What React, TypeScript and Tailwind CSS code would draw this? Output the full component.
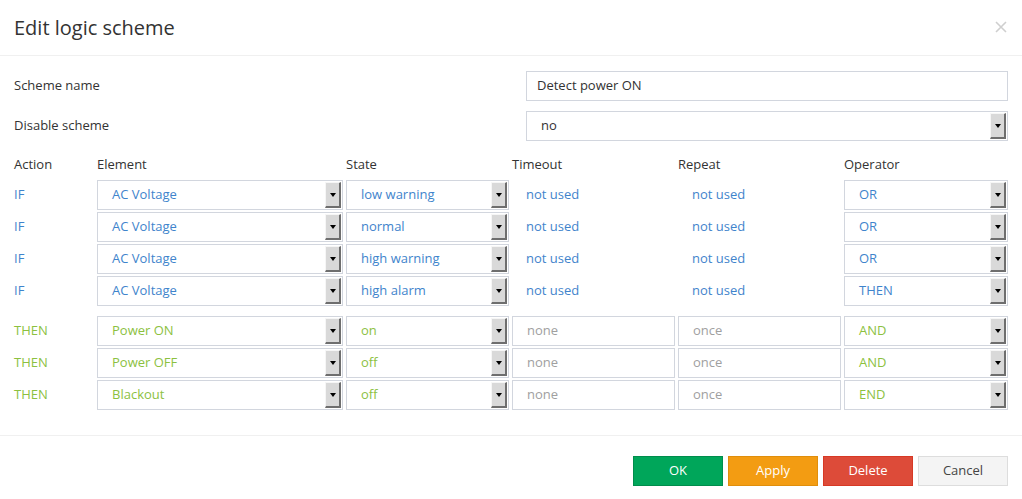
import React from "react";

type Tone = "blue" | "green";

// rule rows of the scheme
const rules: {
  action: string;
  element: string;
  state: string;
  timeout: string;
  repeat: string;
  operator: string;
  tone: Tone;
}[] = [
  { action: "IF", element: "AC Voltage", state: "low warning", timeout: "not used", repeat: "not used", operator: "OR", tone: "blue" },
  { action: "IF", element: "AC Voltage", state: "normal", timeout: "not used", repeat: "not used", operator: "OR", tone: "blue" },
  { action: "IF", element: "AC Voltage", state: "high warning", timeout: "not used", repeat: "not used", operator: "OR", tone: "blue" },
  { action: "IF", element: "AC Voltage", state: "high alarm", timeout: "not used", repeat: "not used", operator: "THEN", tone: "blue" },
  { action: "THEN", element: "Power ON", state: "on", timeout: "none", repeat: "once", operator: "AND", tone: "green" },
  { action: "THEN", element: "Power OFF", state: "off", timeout: "none", repeat: "once", operator: "AND", tone: "green" },
  { action: "THEN", element: "Blackout", state: "off", timeout: "none", repeat: "once", operator: "END", tone: "green" },
];

const toneText: Record<Tone, string> = {
  blue: "text-[#3f84cc]",
  green: "text-[#8cc13f]",
};

function ArrowButton() {
  return (
    <div className="my-px mr-px flex w-[16px] items-center justify-center self-stretch border-t border-l border-r-2 border-b-2 border-t-[#f6f6f6] border-l-[#f6f6f6] border-r-[#6e6e6e] border-b-[#6e6e6e] bg-[#d9d9d9]">
      <span className="block h-0 w-0 border-x-[3px] border-t-[4px] border-x-transparent border-t-black" />
    </div>
  );
}

function Select({ value, className = "" }: { value: string; className?: string }) {
  return (
    <div className={`flex h-[30px] items-stretch border border-[#d2d6de] bg-white ${className}`}>
      <span className="flex flex-1 items-center pl-[14px]">{value}</span>
      <ArrowButton />
    </div>
  );
}

function TextBox({ value, className = "" }: { value: string; className?: string }) {
  return (
    <div className={`flex h-[30px] items-center border border-[#d2d6de] bg-white pl-[10px] ${className}`}>
      {value}
    </div>
  );
}

export default function App() {
  const ifRows = rules.filter((r) => r.action === "IF");
  const thenRows = rules.filter((r) => r.action === "THEN");

  const renderRow = (r: (typeof rules)[number], i: number) => (
    <div
      key={i}
      className={`grid h-[30px] grid-cols-[80px_246px_163px_163px_163px_1fr] gap-x-[3px] ${toneText[r.tone]}`}
    >
      <div className="flex items-center">{r.action}</div>
      <Select value={r.element} />
      <Select value={r.state} />
      {r.tone === "blue" ? (
        <>
          <div className="flex items-center pl-[14px]">{r.timeout}</div>
          <div className="flex items-center pl-[14px]">{r.repeat}</div>
        </>
      ) : (
        <>
          <TextBox value={r.timeout} className="pl-[14px] text-[#a0a0a0]" />
          <TextBox value={r.repeat} className="pl-[14px] text-[#a0a0a0]" />
        </>
      )}
      <Select value={r.operator} />
    </div>
  );

  return (
    <div className="h-[499px] w-full bg-white text-[13px] text-[#333] [font-family:'Open_Sans',sans-serif]">
      {/* HEADER */}
      <div className="flex h-[56px] items-center justify-between border-b border-[#f0f0f0] px-[14px]">
        <h4 className="text-[20px] leading-none text-[#333]">Edit logic scheme</h4>
        <svg width="12" height="12" viewBox="0 0 12 12" className="mr-[1px] mb-[2px]">
          <path d="M1 1 L11 11 M11 1 L1 11" stroke="#cfcfcf" strokeWidth="1.6" />
        </svg>
      </div>

      {/* BODY */}
      <div className="px-[14px] pt-[15px] pb-[25px]">
        <div className="flex h-[30px] items-center">
          <span className="flex-1 pb-px">Scheme name</span>
          <TextBox value="Detect power ON" className="w-[482px]" />
        </div>
        <div className="mt-[10px] flex h-[30px] items-center">
          <span className="flex-1 pb-px">Disable scheme</span>
          <Select value="no" className="w-[482px]" />
        </div>

        <div className="mt-[14px] grid h-[20px] grid-cols-[80px_246px_163px_163px_163px_1fr] items-center gap-x-[3px]">
          <div>Action</div>
          <div>Element</div>
          <div>State</div>
          <div>Timeout</div>
          <div>Repeat</div>
          <div>Operator</div>
        </div>

        <div className="mt-[5px] flex flex-col gap-[2px]">{ifRows.map(renderRow)}</div>
        <div className="mt-[10px] flex flex-col gap-[2px]">{thenRows.map(renderRow)}</div>
      </div>

      {/* FOOTER */}
      <div className="flex justify-end gap-[5px] border-t border-[#f0f0f0] px-[14px] pt-[20px]">
        <button className="h-[30px] w-[90px] border border-[#008d4c] bg-[#00a65a] text-white">OK</button>
        <button className="h-[30px] w-[90px] border border-[#e08e0b] bg-[#f39c12] text-white">Apply</button>
        <button className="h-[30px] w-[90px] border border-[#d73925] bg-[#dd4b39] text-white">Delete</button>
        <button className="h-[30px] w-[90px] border border-[#dddddd] bg-[#f4f4f4] text-[#444]">Cancel</button>
      </div>
    </div>
  );
}
